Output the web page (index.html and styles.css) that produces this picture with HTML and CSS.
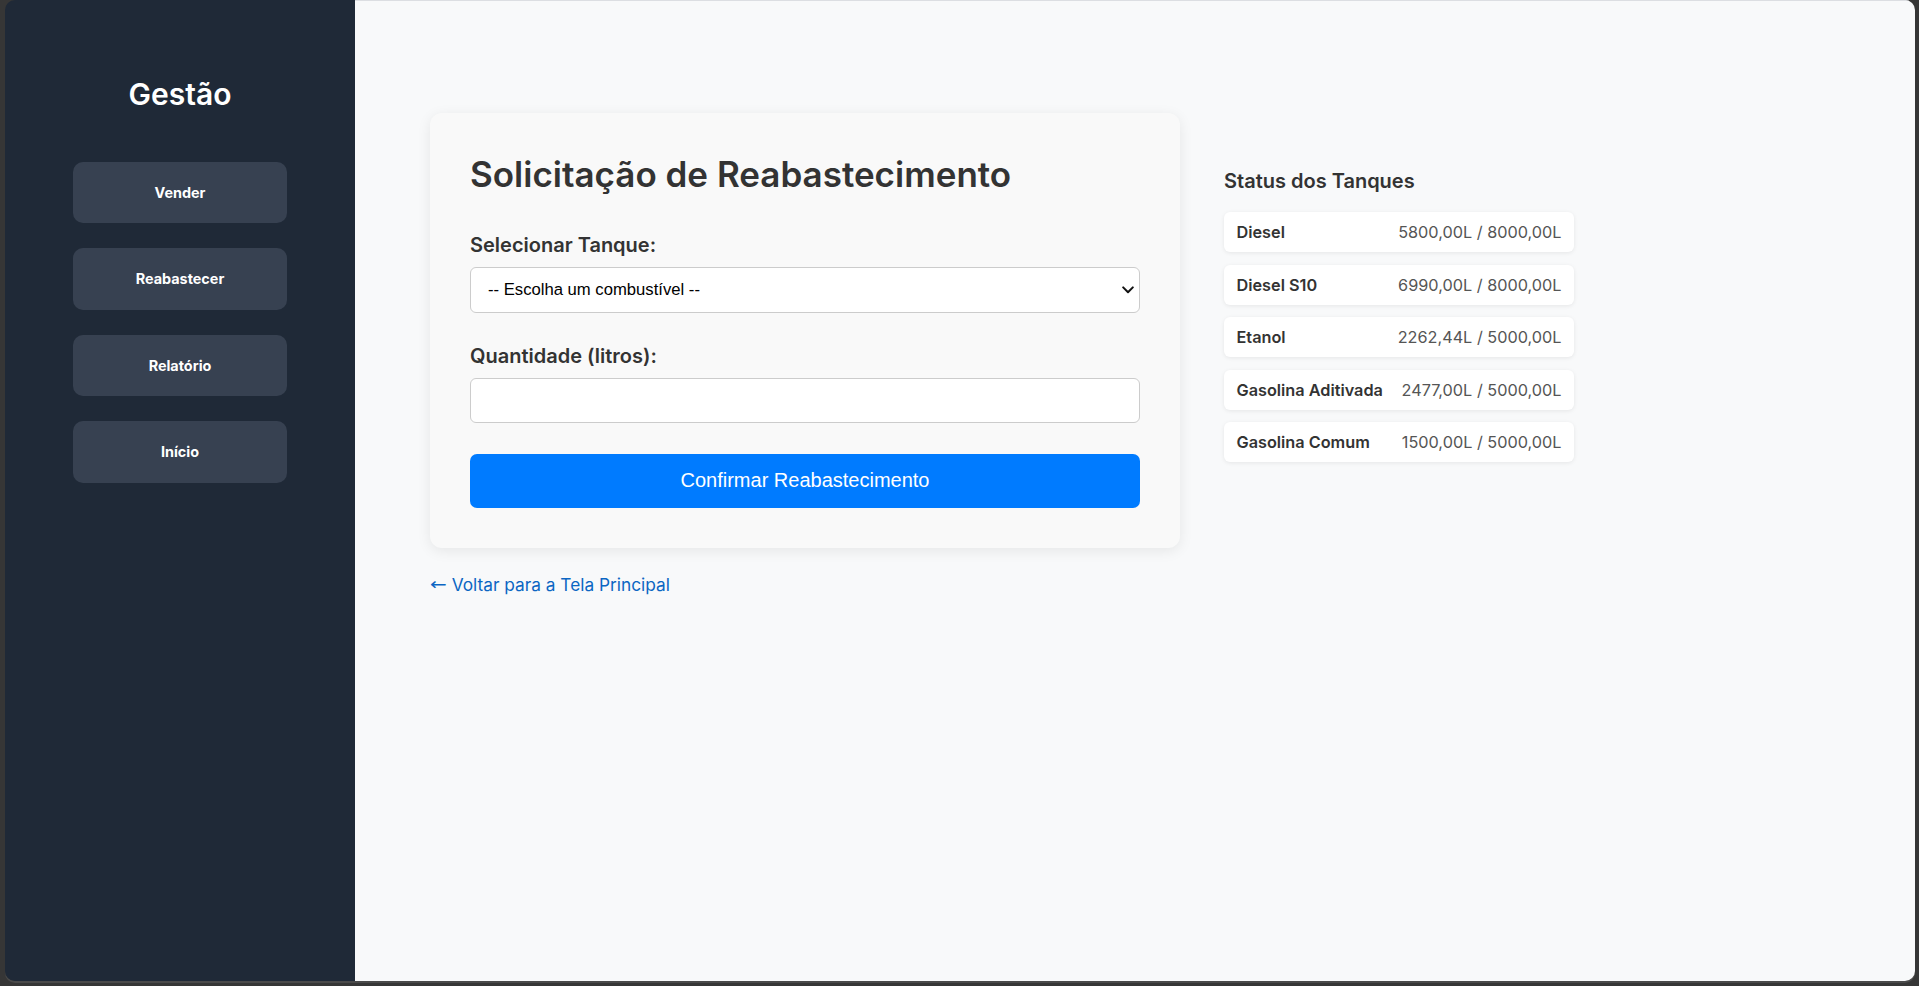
FILE: index.html
```html
<!DOCTYPE html>
<html lang="pt-BR">
<head>
<meta charset="utf-8">
<title>Reabastecimento</title>
<link rel="stylesheet" href="styles.css">
</head>
<body>
<div class="window">
  <aside class="sidebar">
    <h2 class="brand">Gestão</h2>
    <nav class="nav">
      <a class="nav-btn" href="#">Vender</a>
      <a class="nav-btn" href="#">Reabastecer</a>
      <a class="nav-btn" href="#">Relatório</a>
      <a class="nav-btn" href="#">Início</a>
    </nav>
  </aside>
  <main class="main">
    <section class="left-col">
      <div class="card">
        <h1 class="title">Solicitação de Reabastecimento</h1>
        <form class="form">
          <label class="label" for="tanque">Selecionar Tanque:</label>
          <div class="select-wrap">
            <select class="field select" id="tanque">
              <option>-- Escolha um combustível --</option>
              <option>Diesel</option>
              <option>Diesel S10</option>
              <option>Etanol</option>
              <option>Gasolina Aditivada</option>
              <option>Gasolina Comum</option>
            </select>
            <svg class="chevron" width="12" height="8" viewBox="0 0 12 8" aria-hidden="true"><path d="M1.2 1.4 L6 6.2 L10.8 1.4" fill="none" stroke="#111" stroke-width="2" stroke-linecap="round" stroke-linejoin="round"/></svg>
          </div>
          <label class="label label-gap" for="qtd">Quantidade (litros):</label>
          <input class="field input" id="qtd" type="number">
          <button class="submit" type="button">Confirmar Reabastecimento</button>
        </form>
      </div>
      <a class="back" href="#"><span class="arrow">←</span> Voltar para a Tela Principal</a>
    </section>
    <section class="status">
      <h3 class="status-title">Status dos Tanques</h3>
      <ul class="tank-list">
        <li class="tank"><span class="tank-name">Diesel</span><span class="tank-val">5800,00L / 8000,00L</span></li>
        <li class="tank"><span class="tank-name">Diesel S10</span><span class="tank-val">6990,00L / 8000,00L</span></li>
        <li class="tank"><span class="tank-name">Etanol</span><span class="tank-val">2262,44L / 5000,00L</span></li>
        <li class="tank"><span class="tank-name">Gasolina Aditivada</span><span class="tank-val">2477,00L / 5000,00L</span></li>
        <li class="tank"><span class="tank-name">Gasolina Comum</span><span class="tank-val">1500,00L / 5000,00L</span></li>
      </ul>
    </section>
  </main>
</div>
</body>
</html>
```

FILE: styles.css
```css
* { box-sizing: border-box; }

html, body {
  margin: 0;
  height: 100%;
}

body {
  background: #363636;
  font-family: Inter, "Noto Sans", sans-serif;
  color: #333;
  overflow: hidden;
}

.window {
  margin-left: 5px;
  width: 1910px;
  height: 981px;
  border-radius: 10px;
  overflow: hidden;
  display: flex;
  box-shadow: 0 2px 0 #4a4a4a;
}

.sidebar {
  width: 350px;
  flex: 0 0 350px;
  background: #1f2937;
  display: flex;
  flex-direction: column;
  align-items: center;
  padding-top: 76px;
}

.brand {
  margin: 0;
  font-size: 30px;
  line-height: 36px;
  font-weight: 600;
  color: #fff;
}

.nav {
  margin-top: 49.5px;
  display: flex;
  flex-direction: column;
  gap: 25px;
}

.nav-btn {
  width: 214px;
  height: 61.5px;
  display: flex;
  align-items: center;
  justify-content: center;
  background: #374151;
  color: #fff;
  text-decoration: none;
  font-size: 14.4px;
  font-weight: 700;
  border-radius: 10px;
}

.main {
  flex: 1;
  background: #f8f9fa;
  border-top: 1px solid #dcdee2;
  padding: 112px 0 0 75px;
  display: flex;
  align-items: flex-start;
  gap: 44px;
}

.left-col {
  width: 750px;
  display: flex;
  flex-direction: column;
}

.card {
  background: #f9f9f9;
  border-radius: 12px;
  padding: 40px;
  box-shadow: 0 3px 14px rgba(0, 0, 0, 0.08);
}

.title {
  margin: 0 0 36px;
  font-size: 35px;
  font-weight: 600;
  color: #333;
  line-height: 43.6px;
}

.form {
  display: flex;
  flex-direction: column;
}

.label {
  font-size: 20px;
  font-weight: 600;
  color: #333;
  margin-bottom: 10px;
  line-height: 24px;
}

.label-gap {
  margin-top: 31px;
}

.field {
  width: 100%;
  border: 1px solid #cccccc;
  border-radius: 6px;
  background: #fff;
  font-family: "Liberation Sans", Arial, sans-serif;
  font-size: 16.67px;
  color: #000;
}

.select-wrap {
  position: relative;
}

.select {
  display: block;
  height: 46px;
  padding: 0 30px 0 17px;
  appearance: none;
  -webkit-appearance: none;
}

.chevron {
  position: absolute;
  right: 6px;
  top: 19px;
  pointer-events: none;
}

.input {
  height: 45px;
  padding: 0 12px;
}

.submit {
  margin-top: 31px;
  height: 54px;
  border: none;
  border-radius: 7px;
  background: #007bff;
  color: #fff;
  font-family: "Liberation Sans", Arial, sans-serif;
  font-size: 20px;
}

.back {
  margin-top: 26px;
  color: #0b66c3;
  text-decoration: none;
  font-size: 17.3px;
  line-height: 22px;
}

.arrow {
  font-family: "DejaVu Sans", sans-serif;
  font-size: 20px;
  line-height: 1;
  display: inline-block;
  transform: scaleY(0.85);
}

.status {
  width: 350px;
  margin-top: 56px;
}

.status-title {
  margin: 0 0 19px;
  font-size: 20px;
  font-weight: 600;
  line-height: 24px;
  color: #333;
}

.tank-list {
  list-style: none;
  margin: 0;
  padding: 0;
  display: flex;
  flex-direction: column;
  gap: 12.5px;
}

.tank {
  height: 40px;
  display: flex;
  align-items: center;
  justify-content: space-between;
  padding: 0 12.5px;
  background: #fff;
  border-radius: 6px;
  box-shadow: 0 1px 4px rgba(0, 0, 0, 0.08);
  font-size: 16.25px;
}

.tank-name {
  font-weight: 600;
  color: #333;
}

.tank-val {
  color: #555;
}
```
